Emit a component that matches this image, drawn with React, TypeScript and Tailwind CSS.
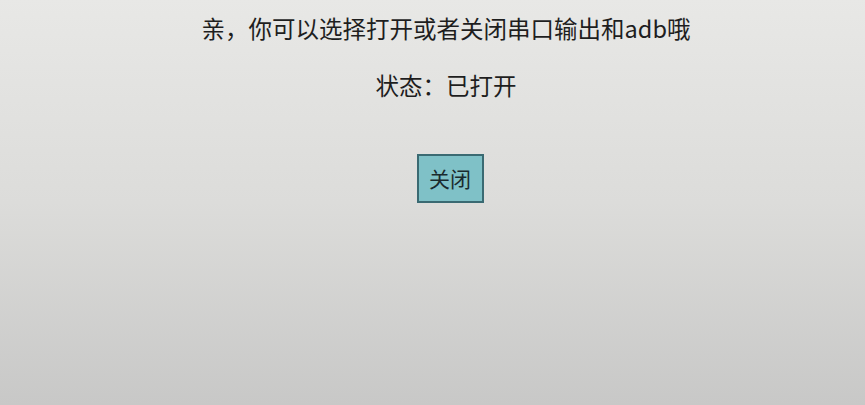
export default function App() {
    return (
        <div
            className="w-[865px] h-[405px] overflow-hidden bg-gradient-to-b from-[#e8e8e6] via-[#dcdcda] to-[#c8c8c7] flex flex-col items-center pl-[27px] text-[#1e1e1e]"
            style={{ fontFamily: '"Noto Sans CJK SC", "Noto Sans", sans-serif' }}
        >
            <p className="mt-[12px] h-[32px] leading-[32px] text-[23.5px]">
                亲，你可以选择打开或者关闭串口输出和adb哦
            </p>
            <p className="mt-[25px] h-[32px] leading-[32px] text-[23.5px]">状态：已打开</p>
            <button className="mt-[53px] ml-[8px] w-[67px] h-[49px] bg-[#7fc1c7] border-2 border-[#3a6a72] text-[21px] leading-none text-[#1a2a2e]">
                关闭
            </button>
        </div>
    );
}
